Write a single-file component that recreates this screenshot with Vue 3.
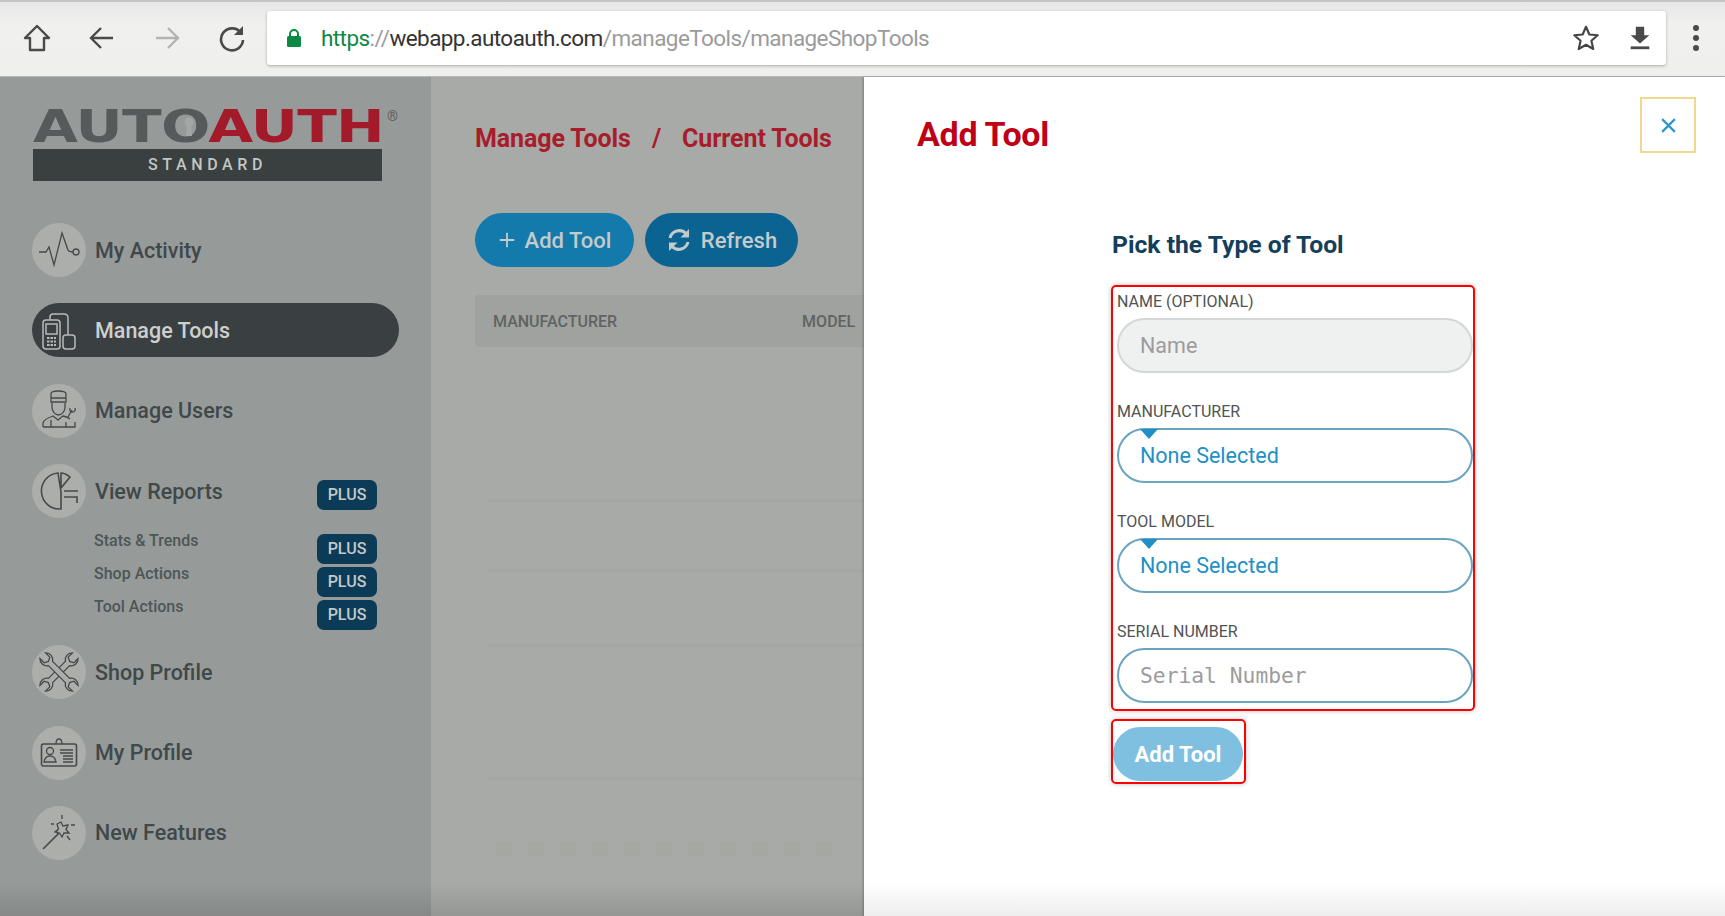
<template>
  <div class="screen">
    <!-- browser chrome -->
    <header class="chrome">
      <div class="nav-icons">
        <svg class="nav-icon" viewBox="0 0 30 30"><path d="M15 3 L27 15 H22 V27 H8 V15 H3 Z" fill="none" stroke="#4a4a4a" stroke-width="2.4" stroke-linejoin="round" /></svg>
        <svg class="nav-icon" viewBox="0 0 30 30"><path d="M26 15 H5 M14 5 L4 15 L14 25" fill="none" stroke="#4a4a4a" stroke-width="2.4" /></svg>
        <svg class="nav-icon" viewBox="0 0 30 30"><path d="M4 15 H25 M16 5 L26 15 L16 25" fill="none" stroke="#b3b3b3" stroke-width="2.4" /></svg>
        <svg class="nav-icon" viewBox="0 0 30 30"><path d="M24 10 A11 11 0 1 0 26 17" fill="none" stroke="#4a4a4a" stroke-width="2.6" /><path d="M26 3 V12 H17 Z" fill="#4a4a4a" /></svg>
      </div>
      <div class="urlbar">
        <svg class="lock" viewBox="0 0 16 20"><path d="M4 9 V6 A4 4 0 0 1 12 6 V9" fill="none" stroke="#0b8a43" stroke-width="2" /><rect x="1" y="8" width="14" height="11" rx="1.5" fill="#0b8a43" /></svg>
        <div class="url"><span class="green">https</span><span class="grey">://</span><span class="dark">webapp.autoauth.com</span><span class="grey">/manageTools/manageShopTools</span></div>
        <svg class="bar-icon" viewBox="0 0 30 30"><path d="M15 3 L18.6 11.3 L27.5 12.1 L20.8 18 L22.8 26.8 L15 22.2 L7.2 26.8 L9.2 18 L2.5 12.1 L11.4 11.3 Z" fill="none" stroke="#444" stroke-width="2.3" stroke-linejoin="round" /></svg>
        <svg class="bar-icon" viewBox="0 0 30 30"><path d="M10.500 3 H19.500 V12 H25 L15 21 L5 12 H10.500 Z" fill="#4a4a4a" /><rect x="5" y="24" width="20" height="3" fill="#4a4a4a" /></svg>
      </div>
      <div class="kebab"><i></i><i></i><i></i></div>
    </header>

    <div class="body">
      <!-- sidebar -->
      <aside class="sidebar">
        <div class="logo">
          <div class="logo-word"><span class="auto">AUTO</span><span class="auth">AUTH</span></div>
          <span class="reg">®</span>
          <svg class="keyhole" viewBox="0 0 14 24"><circle cx="7" cy="7" r="4.500" fill="#a3a7a5" /><path d="M5 9 H9 L10 21 H4 Z" fill="#a3a7a5" /></svg>
          <div class="logo-bar">STANDARD</div>
        </div>

        <nav class="menu">
          <div class="item">
            <span class="circle">
              <svg viewBox="0 0 54 54"><path d="M7 29 H14 L17 24 L22 42 L30 10 L36 27 Q37 29 41 29" class="ln" /><circle cx="44" cy="29" r="3" class="ln" /></svg>
            </span>
            <span class="label">My Activity</span>
          </div>

          <div class="item active">
            <span class="circle">
              <svg viewBox="0 0 54 54">
                <rect x="11" y="17" width="17" height="29" rx="3" class="ln light" />
                <rect x="14" y="21" width="11" height="10" class="ln light" />
                <path d="M15 35 H24 M15 38.500 H24 M15 42 H24" class="ln light dash" />
                <path d="M18 17 V14 Q18 11 21 11 H32 Q36 11 36 15 V32" class="ln light" />
                <rect x="31" y="32" width="12" height="14" rx="3" class="ln light" />
              </svg>
            </span>
            <span class="label">Manage Tools</span>
          </div>

          <div class="item">
            <span class="circle">
              <svg viewBox="0 0 54 54">
                <path d="M19 18 V10 Q19 7 26 7 Q34 7 34 10 V18 Z M19 14 H34" class="ln" />
                <path d="M20 19 V24 Q21 30 26.500 31 Q32 30 33 24 V19" class="ln" />
                <path d="M11 43 V39 Q12 35 21 32 L26 36 L31 32 Q36 33 38 35 M11 43 H43 V38 M19 36 V43 M34 38 V43" class="ln" />
                <path d="M36 33 L40 26 M38 24 Q37 28 41 28 Q44 27 43 24" class="ln" />
              </svg>
            </span>
            <span class="label">Manage Users</span>
          </div>

          <div class="item reports">
            <span class="circle">
              <svg viewBox="0 0 54 54">
                <path d="M26 9 A18 18 0 1 0 29 45 V28 Z M29 9 V24 L38 13 Q33 9 29 9 Z M32 27 H46 M32 33 H45 V39" class="ln thick" />
              </svg>
            </span>
            <span class="label">View Reports</span>
            <span class="plus">PLUS</span>
          </div>

          <div class="subs">
            <div v-for="sub in subItems" :key="sub" class="sub">
              <span class="sub-label">{{ sub }}</span>
              <span class="plus">PLUS</span>
            </div>
          </div>

          <div class="item">
            <span class="circle">
              <svg viewBox="0 0 54 54">
                <path v-for="deg in [45, -45]" :key="deg" :transform="`rotate(${deg} 27 27)`" class="ln wrench" d="M24 15 V39 A7 7 0 0 0 23 50 V44 L27 42 L31 44 V50 A7 7 0 0 0 30 39 V15 A7 7 0 0 0 31 4 V10 L27 12 L23 10 V4 A7 7 0 0 0 24 15 Z" />
              </svg>
            </span>
            <span class="label">Shop Profile</span>
          </div>

          <div class="item">
            <span class="circle">
              <svg viewBox="0 0 54 54">
                <rect x="9.500" y="18" width="35" height="22" rx="2" class="ln thick" />
                <path d="M24 18 Q24 13 27 13 Q30 13 30 18" class="ln" />
                <circle cx="18" cy="25" r="3.500" class="ln" />
                <path d="M12 36 Q13 30 18 30 Q23 30 24 36 Z M28 24 H41 M28 27 H41 M31 30 H41 M31 33 H41 M31 36 H41" class="ln" />
              </svg>
            </span>
            <span class="label">My Profile</span>
          </div>

          <div class="item">
            <span class="circle">
              <svg viewBox="0 0 54 54">
                <path d="M11 43 L26 28 L24.500 25" class="ln thick" />
                <path d="M29 16 L31 20 L36 19 L34 23.500 L37 27 L32 27 L30 31 L27.500 27 L23 26 L26.500 23 L25 18 Z" class="ln" />
                <path d="M30 9 V13 M19 18 H22 M39 19 H43 M35 30 L38 34" class="ln" />
              </svg>
            </span>
            <span class="label">New Features</span>
          </div>
        </nav>
      </aside>

      <!-- page behind the drawer -->
      <main class="main">
        <div class="crumbs">
          <span>Manage Tools</span>
          <span class="slash">/</span>
          <span>Current Tools</span>
        </div>
        <div class="actions">
          <button class="btn add">
            <svg class="btn-icon plus-icon" viewBox="0 0 20 20"><path d="M10 2 V18 M2 10 H18" stroke="#c3cbcb" stroke-width="2" fill="none" /></svg>
            Add Tool
          </button>
          <button class="btn refresh">
            <svg class="btn-icon" viewBox="0 0 26 26">
              <path d="M4 11 A9.500 9.500 0 0 1 20 6.500" fill="none" stroke="#c3cbcb" stroke-width="3" />
              <path d="M23 2 V10.500 H14.500 Z" fill="#c3cbcb" />
              <path d="M22 15 A9.500 9.500 0 0 1 6 19.500" fill="none" stroke="#c3cbcb" stroke-width="3" />
              <path d="M3 24 V15.500 H11.500 Z" fill="#c3cbcb" />
            </svg>
            Refresh
          </button>
        </div>
        <div class="thead">
          <span>MANUFACTURER</span>
          <span class="model">MODEL</span>
        </div>
        <div class="ghost-rows">
          <div v-for="h in rowHeights" :key="h" class="ghost-row" :style="{ height: h + 'px' }"></div>
        </div>
        <div class="pager"><i v-for="n in 11" :key="n"></i></div>
      </main>

      <!-- add tool drawer -->
      <section class="panel">
        <div class="panel-head">
          <h1>Add Tool</h1>
          <button class="close">
            <svg viewBox="0 0 16 16"><path d="M2 2 L14 14 M14 2 L2 14" stroke="#2a97cb" stroke-width="2" fill="none" /></svg>
          </button>
        </div>

        <form class="form" @submit.prevent>
          <h2>Pick the Type of Tool</h2>
          <div class="red-box fields">
            <label class="field">
              <span class="field-label">NAME (OPTIONAL)</span>
              <input class="pill-input disabled" placeholder="Name" />
            </label>
            <div class="field">
              <span class="field-label">MANUFACTURER</span>
              <div class="pill-input select">None Selected</div>
            </div>
            <div class="field">
              <span class="field-label">TOOL MODEL</span>
              <div class="pill-input select">None Selected</div>
            </div>
            <label class="field">
              <span class="field-label">SERIAL NUMBER</span>
              <input class="pill-input mono" placeholder="Serial Number" />
            </label>
          </div>
          <div class="red-box submit-box">
            <button class="submit" type="submit">Add Tool</button>
          </div>
        </form>
      </section>
    </div>
  </div>
</template>

<script setup>
  const subItems = ['Stats & Trends', 'Shop Actions', 'Tool Actions']
  const rowHeights = [155, 70, 75, 133]
</script>

<style>
  html, body {
    margin: 0;
    overflow: hidden;
  }
</style>

<style scoped>
  .screen {
    width: 1725px;
    height: 916px;
    overflow: hidden;
    display: flex;
    flex-direction: column;
    font-family: Roboto, "Liberation Sans", sans-serif;
    background: #fff;
  }

  /* Browser bar */
  .chrome {
    height: 77px;
    box-sizing: border-box;
    flex: none;
    display: flex;
    align-items: flex-start;
    padding-top: 9px;
    background: linear-gradient(#e6e7e6, #f0f0ef 30%, #efefee);
    border-top: 2px solid #c4c4c4;
    border-bottom: 1px solid #b8b8b8;
  }

  .nav-icons {
    width: 267px;
    flex: none;
    display: flex;
    height: 54px;
    align-items: center;
    padding-left: 22px;
    box-sizing: border-box;
    gap: 35px;
  }

  .nav-icon {
    width: 30px;
    height: 30px;
  }

  .urlbar {
    width: 1399px;
    height: 54px;
    flex: none;
    background: #fff;
    border-radius: 3px;
    box-shadow: 0 1px 3px rgba(0, 0, 0, 0.3);
    display: flex;
    align-items: center;
    padding-left: 19px;
    box-sizing: border-box;
  }

  .lock {
    width: 16px;
    height: 20px;
    margin-right: 19px;
  }

  .url {
    flex: 1;
    font-size: 22.500px;
    letter-spacing: -0.570px;
    white-space: nowrap;
  }

  .green { color: #0b8a43; }
  .grey { color: #9b9b9b; }
  .dark { color: #333; }

  .bar-icon {
    width: 28px;
    height: 28px;
    margin-right: 26px;
  }

  .bar-icon:last-child {
    margin-right: 12px;
  }

  .kebab {
    width: 59px;
    height: 54px;
    display: flex;
    flex-direction: column;
    align-items: center;
    justify-content: center;
    gap: 4px;
  }

  .kebab i {
    width: 6px;
    height: 6px;
    border-radius: 50%;
    background: #4a4a4a;
  }

  .body {
    flex: 1;
    display: flex;
    min-height: 0;
  }

  /* Sidebar */
  .sidebar {
    width: 431px;
    flex: none;
    box-sizing: border-box;
    padding: 33px 0 0 32px;
    background: linear-gradient(#969b99 96%, #858886);
  }

  .logo {
    position: relative;
    width: 349px;
    margin: 0 0 42px 1px;
  }

  .logo-word {
    font-family: "DejaVu Sans", sans-serif;
    font-weight: 700;
    font-size: 44px;
    line-height: 33px;
    height: 33px;
    white-space: nowrap;
    transform: scaleX(1.320);
    transform-origin: left center;
    letter-spacing: -0.5px;
  }

  .auto { color: #565a5a; }
  .auth { color: #a31b2b; }

  .reg {
    position: absolute;
    left: 354px;
    top: -2px;
    font-size: 14px;
    color: #5d6060;
  }

  .keyhole {
    position: absolute;
    left: 149px;
    top: 5px;
    width: 14px;
    height: 24px;
  }

  .logo-bar {
    margin-top: 6px;
    height: 32px;
    background: #3a3f40;
    color: #c2c6c4;
    font-size: 16px;
    font-weight: 500;
    letter-spacing: 4.600px;
    line-height: 32px;
    text-align: center;
  }

  .menu {
    display: flex;
    flex-direction: column;
  }

  .item {
    width: 367px;
    height: 54px;
    flex: none;
    display: flex;
    align-items: center;
    margin-bottom: 26.400px;
    border-radius: 27px;
  }

  .item.active {
    background: #3a3f41;
  }

  .circle {
    width: 54px;
    height: 54px;
    flex: none;
    border-radius: 50%;
    background: #abaeab;
    margin-right: 9px;
  }

  .active .circle {
    background: transparent;
  }

  .circle svg {
    display: block;
    width: 54px;
    height: 54px;
  }

  .ln {
    fill: none;
    stroke: #45494a;
    stroke-width: 1.300;
  }

  .ln.thick { stroke-width: 1.600; }
  .ln.light { stroke: #b7bbba; stroke-width: 1.500; }
  .ln.dash { stroke-dasharray: 2.500 1; stroke-width: 2; }
  .ln.wrench { fill: #abaeab; }

  .label {
    font-size: 21.500px;
    font-weight: 500;
    color: #40484a;
  }

  .active .label {
    color: #cdd0ce;
  }

  .reports {
    margin-bottom: 16px;
  }

  .plus {
    margin-left: auto;
    margin-right: 22px;
    width: 60px;
    height: 30px;
    box-sizing: border-box;
    background: #0c3b58;
    border-radius: 7px;
    color: #c3c9c9;
    font-size: 16px;
    font-weight: 500;
    line-height: 30px;
    text-align: center;
  }

  .reports .plus {
    margin-top: 8px;
  }

  .subs {
    display: flex;
    flex-direction: column;
    margin-bottom: 12px;
  }

  .sub {
    width: 367px;
    height: 33px;
    display: flex;
    align-items: flex-start;
    padding-left: 62px;
    box-sizing: border-box;
  }

  .sub-label {
    font-size: 16px;
    font-weight: 500;
    line-height: 14px;
    color: #4d5657;
  }

  /* Page behind the drawer */
  .main {
    width: 433px;
    flex: none;
    box-sizing: border-box;
    padding: 47px 0 0 44px;
    background: linear-gradient(#a8aaa7 96%, #949694);
    overflow: hidden;
  }

  .crumbs {
    display: flex;
    gap: 20px;
    height: 30px;
    line-height: 30px;
    font-size: 25px;
    font-weight: 700;
    color: #a81c2c;
    white-space: nowrap;
    letter-spacing: -0.100px;
  }

  .slash {
    margin: 0 1px;
  }

  .actions {
    display: flex;
    gap: 11px;
    margin-top: 59px;
  }

  .btn {
    height: 54px;
    border: none;
    border-radius: 27px;
    display: flex;
    align-items: center;
    justify-content: center;
    gap: 9px;
    font: 500 22px Roboto, sans-serif;
    color: #c3cbcb;
  }

  .btn.add {
    width: 159px;
    background: #1479ab;
  }

  .btn.refresh {
    width: 153px;
    background: #0b6391;
  }

  .btn-icon {
    width: 26px;
    height: 26px;
  }

  .plus-icon {
    width: 18px;
    height: 18px;
  }

  .thead {
    margin-top: 28px;
    height: 52px;
    width: 500px;
    display: flex;
    align-items: center;
    padding-left: 18px;
    background: #9fa29f;
    border-radius: 4px;
    font-size: 16px;
    font-weight: 500;
    color: #5f6463;
  }

  .model {
    margin-left: 185px;
  }

  .ghost-rows {
    margin-left: 12px;
  }

  .ghost-row {
    border-bottom: 3px solid #a4a6a1;
    box-sizing: border-box;
  }

  .pager {
    display: flex;
    gap: 16px;
    margin: 62px 0 0 21px;
  }

  .pager i {
    width: 16px;
    height: 14px;
    flex: none;
    background: #a5a7a3;
  }

  /* Drawer */
  .panel {
    flex: 1;
    position: relative;
    background: linear-gradient(#fff 96%, #eeeeee);
    box-shadow: -1px 0 2px rgba(0, 0, 0, 0.25);
    padding-top: 20px;
  }

  .panel-head {
    display: flex;
    justify-content: space-between;
    align-items: flex-start;
    padding: 0 29px 0 53px;
  }

  .panel-head h1 {
    margin: 17px 0 0;
    font-size: 34px;
    line-height: 40px;
    font-weight: 700;
    color: #c00017;
    letter-spacing: -0.300px;
  }

  .close {
    width: 56px;
    height: 56px;
    padding: 0;
    background: #fff;
    border: 2px solid #f2d88f;
    display: flex;
    align-items: center;
    justify-content: center;
  }

  .close svg {
    width: 17px;
    height: 17px;
  }

  .form {
    margin: 76px 0 0 247px;
    width: 364px;
  }

  .form h2 {
    margin: 0 0 25px 1px;
    font-size: 24.700px;
    line-height: 30px;
    font-weight: 700;
    color: #133f5c;
  }

  .red-box {
    box-sizing: border-box;
    border: 2px solid #f00;
    border-radius: 5px;
    box-shadow: 0 0 5px rgba(0, 0, 0, 0.25);
  }

  .fields {
    height: 426px;
    padding: 6px 0 0 4px;
    display: flex;
    flex-direction: column;
    gap: 30px;
  }

  .field {
    display: flex;
    flex-direction: column;
  }

  .field-label {
    font-size: 16px;
    line-height: 18px;
    margin-bottom: 7px;
    color: #505353;
  }

  .pill-input {
    width: 356px;
    height: 55px;
    box-sizing: border-box;
    border: 2px solid #6ba4bf;
    border-radius: 27.500px;
    padding: 0 21px;
    font: 400 21.500px Roboto, sans-serif;
    background: #fff;
    outline: none;
  }

  .pill-input::placeholder {
    color: #9c9c9c;
    opacity: 1;
  }

  .pill-input.disabled {
    background: #eff1f1;
    border-color: #d3d7d7;
  }

  .pill-input.mono {
    font: 400 21.300px "DejaVu Sans Mono", monospace;
  }

  .select {
    position: relative;
    display: flex;
    align-items: center;
    color: #2190c4;
  }

  .select::before {
    content: "";
    position: absolute;
    left: 21px;
    top: -1px;
    border-left: 9px solid transparent;
    border-right: 9px solid transparent;
    border-top: 10px solid #1f8fc6;
  }

  .submit-box {
    margin-top: 8px;
    width: 135px;
    height: 65px;
    padding: 6px 0 0 0;
  }

  .submit {
    display: block;
    margin-left: 0;
    width: 130px;
    height: 54px;
    border: none;
    border-radius: 27px;
    background: #7fc0e0;
    color: #fff;
    font: 700 22px Roboto, sans-serif;
  }
</style>
